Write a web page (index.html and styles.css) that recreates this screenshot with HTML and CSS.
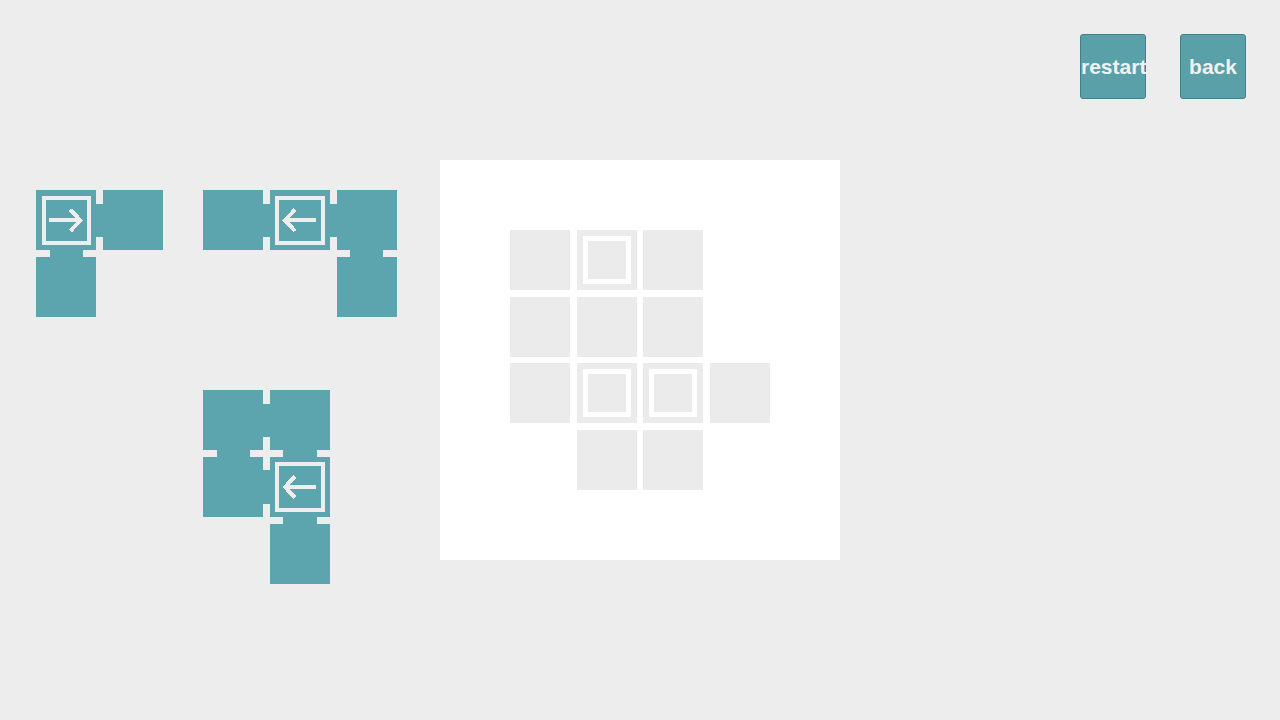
FILE: index.html
```html
<!DOCTYPE html>
<html lang="en">
	<head>
		<meta charset="UTF-8" />
		<meta name="viewport" content="width=device-width, initial-scale=1.0" />
		<title>Blocks</title>
		<link rel="stylesheet" href="styles.css">
	</head>
	<body>
		<header class="toolbar">
			<button type="button" class="btn">restart</button>
			<button type="button" class="btn">back</button>
		</header>

		<main class="play">
			<!-- Pieces: each slot is 10 units (66.67px), cell inset 0.5 -->
			<div class="tray">
				<svg class="piece piece-a" viewBox="0 0 20 20" width="133.33" height="133.33">
					<rect class="cell" x="0.5" y="0.5" width="9" height="9" />
					<rect class="cell" x="10.5" y="0.5" width="9" height="9" />
					<rect class="cell" x="0.5" y="10.5" width="9" height="9" />
					<rect class="cell" x="9.5" y="2.5" width="1" height="5" />
					<rect class="cell" x="2.5" y="9.5" width="5" height="1" />
					<g class="mark">
						<rect x="1.6" y="1.6" width="6.8" height="6.8" />
						<line x1="2.4" y1="5" x2="7" y2="5" />
						<polyline points="5.6,3.4 7.1,5 5.6,6.6" />
					</g>
				</svg>

				<svg class="piece piece-b" viewBox="0 0 30 20" width="200" height="133.33">
					<rect class="cell" x="0.5" y="0.5" width="9" height="9" />
					<rect class="cell" x="10.5" y="0.5" width="9" height="9" />
					<rect class="cell" x="20.5" y="0.5" width="9" height="9" />
					<rect class="cell" x="20.5" y="10.5" width="9" height="9" />
					<rect class="cell" x="9.5" y="2.5" width="1" height="5" />
					<rect class="cell" x="19.5" y="2.5" width="1" height="5" />
					<rect class="cell" x="22.5" y="9.5" width="5" height="1" />
					<g class="mark" transform="translate(10 0)">
						<rect x="1.6" y="1.6" width="6.8" height="6.8" />
						<line x1="2.9" y1="5" x2="7.45" y2="5" />
						<polyline points="4.25,3.4 2.75,5 4.25,6.6" />
					</g>
				</svg>

				<svg class="piece piece-c" viewBox="0 0 20 30" width="133.33" height="200">
					<rect class="cell" x="0.5" y="0.5" width="9" height="9" />
					<rect class="cell" x="10.5" y="0.5" width="9" height="9" />
					<rect class="cell" x="0.5" y="10.5" width="9" height="9" />
					<rect class="cell" x="10.5" y="10.5" width="9" height="9" />
					<rect class="cell" x="10.5" y="20.5" width="9" height="9" />
					<rect class="cell" x="9.5" y="2.5" width="1" height="5" />
					<rect class="cell" x="9.5" y="12.5" width="1" height="5" />
					<rect class="cell" x="2.5" y="9.5" width="5" height="1" />
					<rect class="cell" x="12.5" y="9.5" width="5" height="1" />
					<rect class="cell" x="12.5" y="19.5" width="5" height="1" />
					<g class="mark" transform="translate(10 10)">
						<rect x="1.6" y="1.6" width="6.8" height="6.8" />
						<line x1="2.9" y1="5" x2="7.45" y2="5" />
						<polyline points="4.25,3.4 2.75,5 4.25,6.6" />
					</g>
				</svg>
			</div>

			<!-- Board: 4x4 play area inside a one-slot margin -->
			<div class="board">
				<div class="slot"></div>
				<div class="slot target"></div>
				<div class="slot"></div>
				<div class="slot empty"></div>

				<div class="slot"></div>
				<div class="slot"></div>
				<div class="slot"></div>
				<div class="slot empty"></div>

				<div class="slot"></div>
				<div class="slot target"></div>
				<div class="slot target"></div>
				<div class="slot"></div>

				<div class="slot empty"></div>
				<div class="slot"></div>
				<div class="slot"></div>
				<div class="slot empty"></div>
			</div>
		</main>
	</body>
</html>
```

FILE: styles.css
```css
html, body {
	margin: 0;
	height: 100%;
}

body {
	background-color: #ededed;
	font-family: "Liberation Sans", Arial, sans-serif;
	overflow: hidden;
}

.toolbar {
	display: flex;
	justify-content: flex-end;
	gap: 34px;
	padding: 34px 34px 0 0;
}

.btn {
	box-sizing: border-box;
	width: 66px;
	height: 65px;
	padding: 0;
	border: 1px solid #44808a;
	border-radius: 3px;
	background-color: #5aa0a9;
	color: #f2f2f2;
	font-family: "Liberation Sans", Arial, sans-serif;
	font-size: 21px;
	font-weight: bold;
	text-align: center;
	white-space: nowrap;
	cursor: pointer;
}

.play {
	display: flex;
	margin-top: 61px;
}

.tray {
	position: relative;
	width: 440px;
	height: 400px;
	flex: none;
}

.piece {
	position: absolute;
	shape-rendering: crispEdges;
}

.piece-a {
	left: 33.33px;
	top: 26.67px;
}

.piece-b {
	left: 200px;
	top: 26.67px;
}

.piece-c {
	left: 200px;
	top: 226.67px;
}

.piece .cell {
	fill: #5ca5ae;
}

.piece .mark {
	fill: none;
	stroke: #eeeeee;
	stroke-width: 0.6;
}

.board {
	box-sizing: border-box;
	width: 400px;
	height: 400px;
	padding: 70px;
	background-color: #ffffff;
	display: grid;
	grid-template-columns: repeat(4, 60px);
	grid-auto-rows: 60px;
	gap: 6.667px;
}

.slot {
	position: relative;
	background-color: #ebebeb;
}

.slot.empty {
	background: none;
}

.slot.target::after {
	content: "";
	position: absolute;
	inset: 6px;
	border: 5px solid #ffffff;
}
```
